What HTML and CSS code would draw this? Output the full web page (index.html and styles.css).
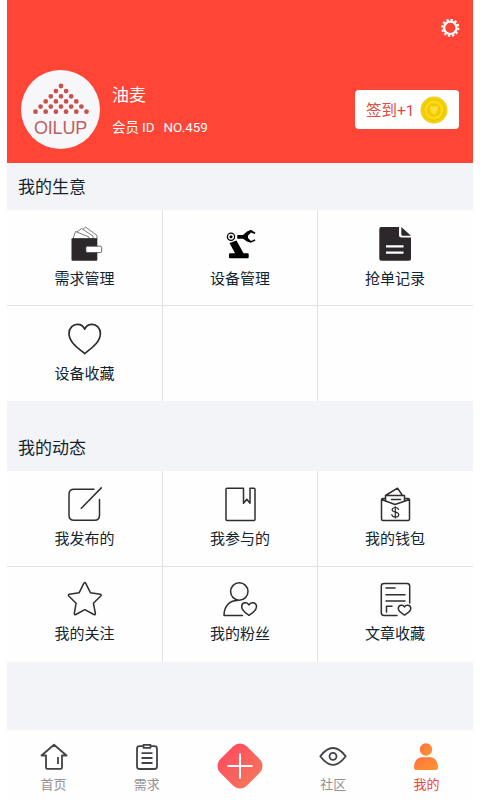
FILE: index.html
```html
<!DOCTYPE html>
<html lang="zh-CN">
<head>
<meta charset="utf-8">
<title>我的</title>
<link rel="stylesheet" href="styles.css">
</head>
<body>
<div class="app">
  <header class="header">
    <div class="avatar">
      <svg class="dots" width="56" height="34" viewBox="0 0 56 34">
        <path d="M28 4h0M22.9 9.1h0M33.1 9.1h0M17.8 14.3h0M28 14.3h0M38.2 14.3h0M12.7 19.4h0M22.9 19.4h0M33.1 19.4h0M43.3 19.4h0M7.6 24.6h0M17.8 24.6h0M28 24.6h0M38.2 24.6h0M48.4 24.6h0M2.5 29.7h0M12.7 29.7h0M22.9 29.7h0M33.1 29.7h0M43.3 29.7h0M53.5 29.7h0"/>
      </svg>
      <span class="brand">OILUP</span>
    </div>
    <div class="user">
      <div class="name">油麦</div>
      <div class="member"><span>会员 ID</span><span>NO.459</span></div>
    </div>
    <div class="actions">
      <svg class="gear" width="20" height="20" viewBox="0 0 20 20">
        <circle cx="11.300" cy="9.800" r="6.200" fill="none" stroke="#fff" stroke-width="2.200"/>
        <circle cx="11.300" cy="9.800" r="8" fill="none" stroke="#fff" stroke-width="2.200" stroke-dasharray="2.300 1.889"/>
      </svg>
      <div class="sign"><span>签到+1</span>
        <svg width="28" height="28" viewBox="0 0 28 28">
          <circle cx="14" cy="14" r="13.5" fill="#f3cf12"/>
          <circle cx="14" cy="14" r="10.3" fill="#ffdc05" stroke="#e9be0c"/>
          <circle cx="14" cy="14" r="5.5" fill="none" stroke="#edc514" stroke-width="2.6"/>
          <path d="M10.5 10.5l3.5 4 3.5-4M14 14.5V18" fill="none" stroke="#f6e04c" stroke-width="2"/>
        </svg>
      </div>
    </div>
  </header>

  <h2 class="title">我的生意</h2>
  <div class="grid">
    <div class="cell">
      <svg class="icon" viewBox="0 0 36 36">
        <g fill="#fff" stroke="#555" stroke-width=".8"><path d="M14 5l4.500-4 11.500 8.500V13H16z"/><path d="M10 6l4.500-3.500L26 10v3H12z"/><path d="M6 13l2.500-7.500L22 11v2z"/></g>
        <rect x="4.500" y="12.300" width="25.800" height="22.400" rx="1" fill="#2b272a"/>
        <rect x="18.900" y="20.200" width="15.800" height="6.400" rx="1.500" fill="#fff" stroke="#444" stroke-width=".8"/>
      </svg>
      <span>需求管理</span>
    </div>
    <div class="cell">
      <svg class="icon" viewBox="0 0 36 36">
        <circle cx="9" cy="10.700" r="3.600" fill="none" stroke="#000" stroke-width="1.300"/><circle cx="9" cy="10.700" r="1.500"/>
        <path d="M15.300 9H21l4-3.500L29 3.700l4.500 3-.8 1.300-3.700-1.600-3 3.200v2.500l3 2.900 3.700-1.800.8 1.300-4.500 2.300-4-1.400-4-2.700h-5.700z"/>
        <path d="M7.500 17l7-2.500L21.500 27.300h4.200q1 0 1 1v3q0 1-1 1H8q-1 0-1-1v-3q0-1 1-1h5z"/>
      </svg>
      <span>设备管理</span>
    </div>
    <div class="cell">
      <svg class="icon" viewBox="0 0 36 36">
        <path d="M4.300 1H22v8q0 2.500 2.500 2.500H34v21.200q0 2-2 2H4.300q-2 0-2-2V3q0-2 2-2zM24.300 1L34 9.700h-8.200q-1.500 0-1.500-1.500z" fill="#2b272a"/>
        <path d="M9 20.300h17.500M9 26.700h17.500" stroke="#fff" stroke-width="2.200"/>
      </svg>
      <span>抢单记录</span>
    </div>
    <div class="cell">
      <svg class="icon line" viewBox="0 0 36 36">
        <path stroke-width="1.700" d="M17.700 32.500C12 28 2 21.500 2 12.500 2 7 6 3.300 10.300 3.300c3.700 0 6.200 2 7.400 4.900 1.200-2.900 3.700-4.900 7.400-4.900 4.300 0 8.300 3.700 8.300 9.200 0 9-10 15.500-15.700 20z"/>
      </svg>
      <span>设备收藏</span>
    </div>
    <div class="cell"></div>
    <div class="cell"></div>
  </div>

  <h2 class="title second">我的动态</h2>
  <div class="grid">
    <div class="cell">
      <svg class="icon line" viewBox="0 0 36 36">
        <path d="M27 2.300H7Q2 2.300 2 7.300v21q0 5 5 5h20.500q5 0 5-5V12.500M34.300.9L14.300 21.300"/>
      </svg>
      <span>我发布的</span>
    </div>
    <div class="cell">
      <svg class="icon line" viewBox="0 0 36 36">
        <path d="M21.500 1.300H5q-1 0-1 1v30.100q0 1 1 1h27q1 0 1-1V2.300q0-1-1-1h-4v15l-3.200-4-3.300 4V1.300"/>
      </svg>
      <span>我参与的</span>
    </div>
    <div class="cell">
      <svg class="icon line" viewBox="0 0 36 36">
        <path d="M8 11.500H6q-1.500 0-1.500 1.500v19q0 1.500 1.500 1.500h25q1.500 0 1.500-1.500V13q0-1.500-1.500-1.500h-3M4.500 12.500l13.500 5 14.500-5"/>
        <path d="M8.500 13.500v-5h19v5M8.500 8.500L20.500 1.200l5 7.300M14.500 12.500h9"/>
        <path stroke-width="1.200" d="M21.500 22.500q-.5-2-3.200-2t-3.200 2.100q0 1.800 3.200 2.500 3.500.7 3.500 2.700 0 2.200-3.400 2.200-3.100 0-3.600-2.400M18.300 19.500v11.500"/>
      </svg>
      <span>我的钱包</span>
    </div>
    <div class="cell">
      <svg class="icon line" viewBox="0 0 36 36">
        <path d="M16.800 1.300q1-1.600 2 0l4.600 9.400 9.800 1.500q1.700.5.500 1.800l-7.300 7.200 2 10.300q.1 1.600-1.500 1l-9.100-4.900-9 4.900q-1.600.6-1.500-1l1.800-10.300L1.800 14q-1.200-1.300.5-1.800l9.900-1.500z"/>
      </svg>
      <span>我的关注</span>
    </div>
    <div class="cell">
      <svg class="icon line" viewBox="0 0 36 36">
        <circle cx="17.300" cy="9.500" r="8.700"/>
        <path d="M20.500 33.500H2C2 24.800 7 18.500 15.500 18.500M27 33.300c-3-2-7.300-4.700-7.300-8.600 0-4.400 5.600-5.300 7.300-1.700 1.700-3.600 7.500-2.700 7.500 1.700 0 3.900-4.500 6.600-7.500 8.600z"/>
      </svg>
      <span>我的粉丝</span>
    </div>
    <div class="cell">
      <svg class="icon line" viewBox="0 0 36 36">
        <path d="M20 33.500H7q-2.700 0-2.700-2.700V4Q4.300 1.400 7 1.400h23q2.700 0 2.700 2.600v17M9 6h9M9 12.700h19M9 19h19M9.500 30v-5.700H15"/>
        <path d="M27.500 33c-2.300-1.500-6.200-3.400-6.200-6.500 0-3.600 4.700-4.300 6.200-1.500 1.500-2.800 6.300-2.100 6.300 1.500 0 3.100-4 5-6.300 6.500z"/>
      </svg>
      <span>文章收藏</span>
    </div>
  </div>

  <nav class="tabs">
    <div class="tab">
      <svg class="tab-icon" viewBox="0 0 28 28"><path d="M14 1.700L1.500 12.500H6v12q0 1.300 1.300 1.300h13.400q1.300 0 1.300-1.300v-12h4.500zM18 14v7"/></svg>
      <span>首页</span>
    </div>
    <div class="tab">
      <svg class="tab-icon" viewBox="0 0 28 28"><path d="M10.500 3.200H6.500q-2.500 0-2.500 2.500v17.800Q4 26 6.500 26h15q2.500 0 2.500-2.500V5.700q0-2.500-2.500-2.500h-4M8.500 10.200h11M8.500 15h11M8.500 20h11M10.500 1.800h7v3h-7z"/></svg>
      <span>需求</span>
    </div>
    <div class="tab plus">
      <svg width="48" height="48" viewBox="0 0 48 48">
        <defs><linearGradient id="pink"><stop stop-color="#ff4f5e"/><stop offset="1" stop-color="#f5725c"/></linearGradient></defs>
        <rect x="5.300" y="5.300" width="37.400" height="37.400" rx="9.500" transform="rotate(45 24 24)" fill="url(#pink)"/>
        <path d="M11.500 24h25M24 11.500v25" stroke="#fff" stroke-width="2"/>
      </svg>
    </div>
    <div class="tab">
      <svg class="tab-icon" viewBox="0 0 28 28"><path d="M1.300 13.300Q7.500 5 14 5t12.700 8.300Q20.500 21.800 14 21.800T1.300 13.300z"/><circle cx="14" cy="13.300" r="3.500"/></svg>
      <span>社区</span>
    </div>
    <div class="tab active">
      <svg class="tab-icon" viewBox="0 0 28 28">
        <defs><linearGradient id="orange" x2="1" y2="1"><stop stop-color="#ff7040"/><stop offset="1" stop-color="#ff982e"/></linearGradient></defs>
        <g fill="url(#orange)" stroke="none"><circle cx="14" cy="6.500" r="6.200"/><path d="M9 14.300h10q7 1.500 7 10.700 0 2-2 2H4q-2 0-2-2 0-9.200 7-10.700z"/></g>
      </svg>
      <span>我的</span>
    </div>
  </nav>
</div>
</body>
</html>
```
FILE: styles.css
```css
* {
  box-sizing: border-box;
}

body {
  margin: 0;
  background: #fff;
  color: #122430;
  font-family: Roboto, "Noto Sans CJK SC", sans-serif;
}

.app {
  display: flex;
  flex-direction: column;
  width: 466px;
  height: 800px;
  margin-left: 7px;
  background: #f3f4f8;
}

.header {
  display: flex;
  height: 163px;
  padding: 18px 14px 0;
  background: #ff4535;
  color: #fff;
}

.avatar {
  display: flex;
  flex-direction: column;
  align-items: center;
  width: 79px;
  height: 79px;
  margin-top: 52px;
  padding-top: 12px;
  border-radius: 50%;
  background: #f7f6f8;
}

.dots {
  fill: none;
  stroke: #c4524d;
  stroke-width: 4.8;
  stroke-linecap: round;
}

.brand {
  margin-top: 2px;
  color: #bd6260;
  font: 18px/20px "Liberation Sans", sans-serif;
  letter-spacing: -0.2px;
}

.user {
  margin: 65px 0 0 12px;
}

.name {
  font-size: 17px;
  line-height: 24px;
}

.member {
  display: flex;
  gap: 9px;
  margin-top: 11px;
  font-size: 13.4px;
  line-height: 20px;
}

.actions {
  display: flex;
  flex-direction: column;
  align-items: flex-end;
  margin-left: auto;
}

.gear {
  overflow: visible;
}

.sign {
  display: flex;
  align-items: center;
  justify-content: space-between;
  width: 104px;
  height: 39px;
  margin-top: 52px;
  padding: 0 11px;
  border-radius: 4px;
  background: #fff;
  color: #e04a3e;
  font-size: 15.5px;
}

.sign span {
  padding-bottom: 1px;
}

.title {
  height: 47px;
  margin: 0;
  padding-left: 11px;
  font-size: 17px;
  font-weight: 400;
  line-height: 48px;
}

.second {
  height: 70px;
  padding-top: 23px;
}

.grid {
  display: grid;
  grid-template-columns: 156px 155px 155px;
  grid-template-rows: 96px 95px;
  background: #fefefe;
}

.cell {
  display: flex;
  flex-direction: column;
  align-items: center;
  padding-top: 16px;
  border-right: 1px solid #e2e3e7;
  border-bottom: 1px solid #e2e3e7;
  font-size: 15px;
  line-height: 22px;
}

.cell:nth-child(3n) {
  padding-right: 1px;
  border-right: 0;
}

.cell:nth-child(n + 4) {
  padding-top: 15px;
  border-bottom: 0;
}

.icon {
  width: 36px;
  height: 36px;
  margin-bottom: 6px;
  overflow: visible;
}

.second + .grid .icon {
  margin-bottom: 5px;
}

.line {
  fill: none;
  stroke: #302c30;
  stroke-width: 1.5;
  stroke-linejoin: round;
  stroke-linecap: round;
}

.tabs {
  display: grid;
  grid-template-columns: repeat(5, 1fr);
  height: 70px;
  margin-top: auto;
  background: #fefefe;
}

.tab {
  display: flex;
  flex-direction: column;
  align-items: center;
  padding-top: 13px;
  color: #929296;
  font-size: 13px;
  line-height: 20px;
}

.tab-icon {
  width: 28px;
  height: 28px;
  margin-bottom: 4px;
  fill: none;
  stroke: #444246;
  stroke-width: 1.8;
  stroke-linejoin: round;
}

.plus {
  padding-top: 12px;
}

.active {
  color: #ec4638;
}
```
